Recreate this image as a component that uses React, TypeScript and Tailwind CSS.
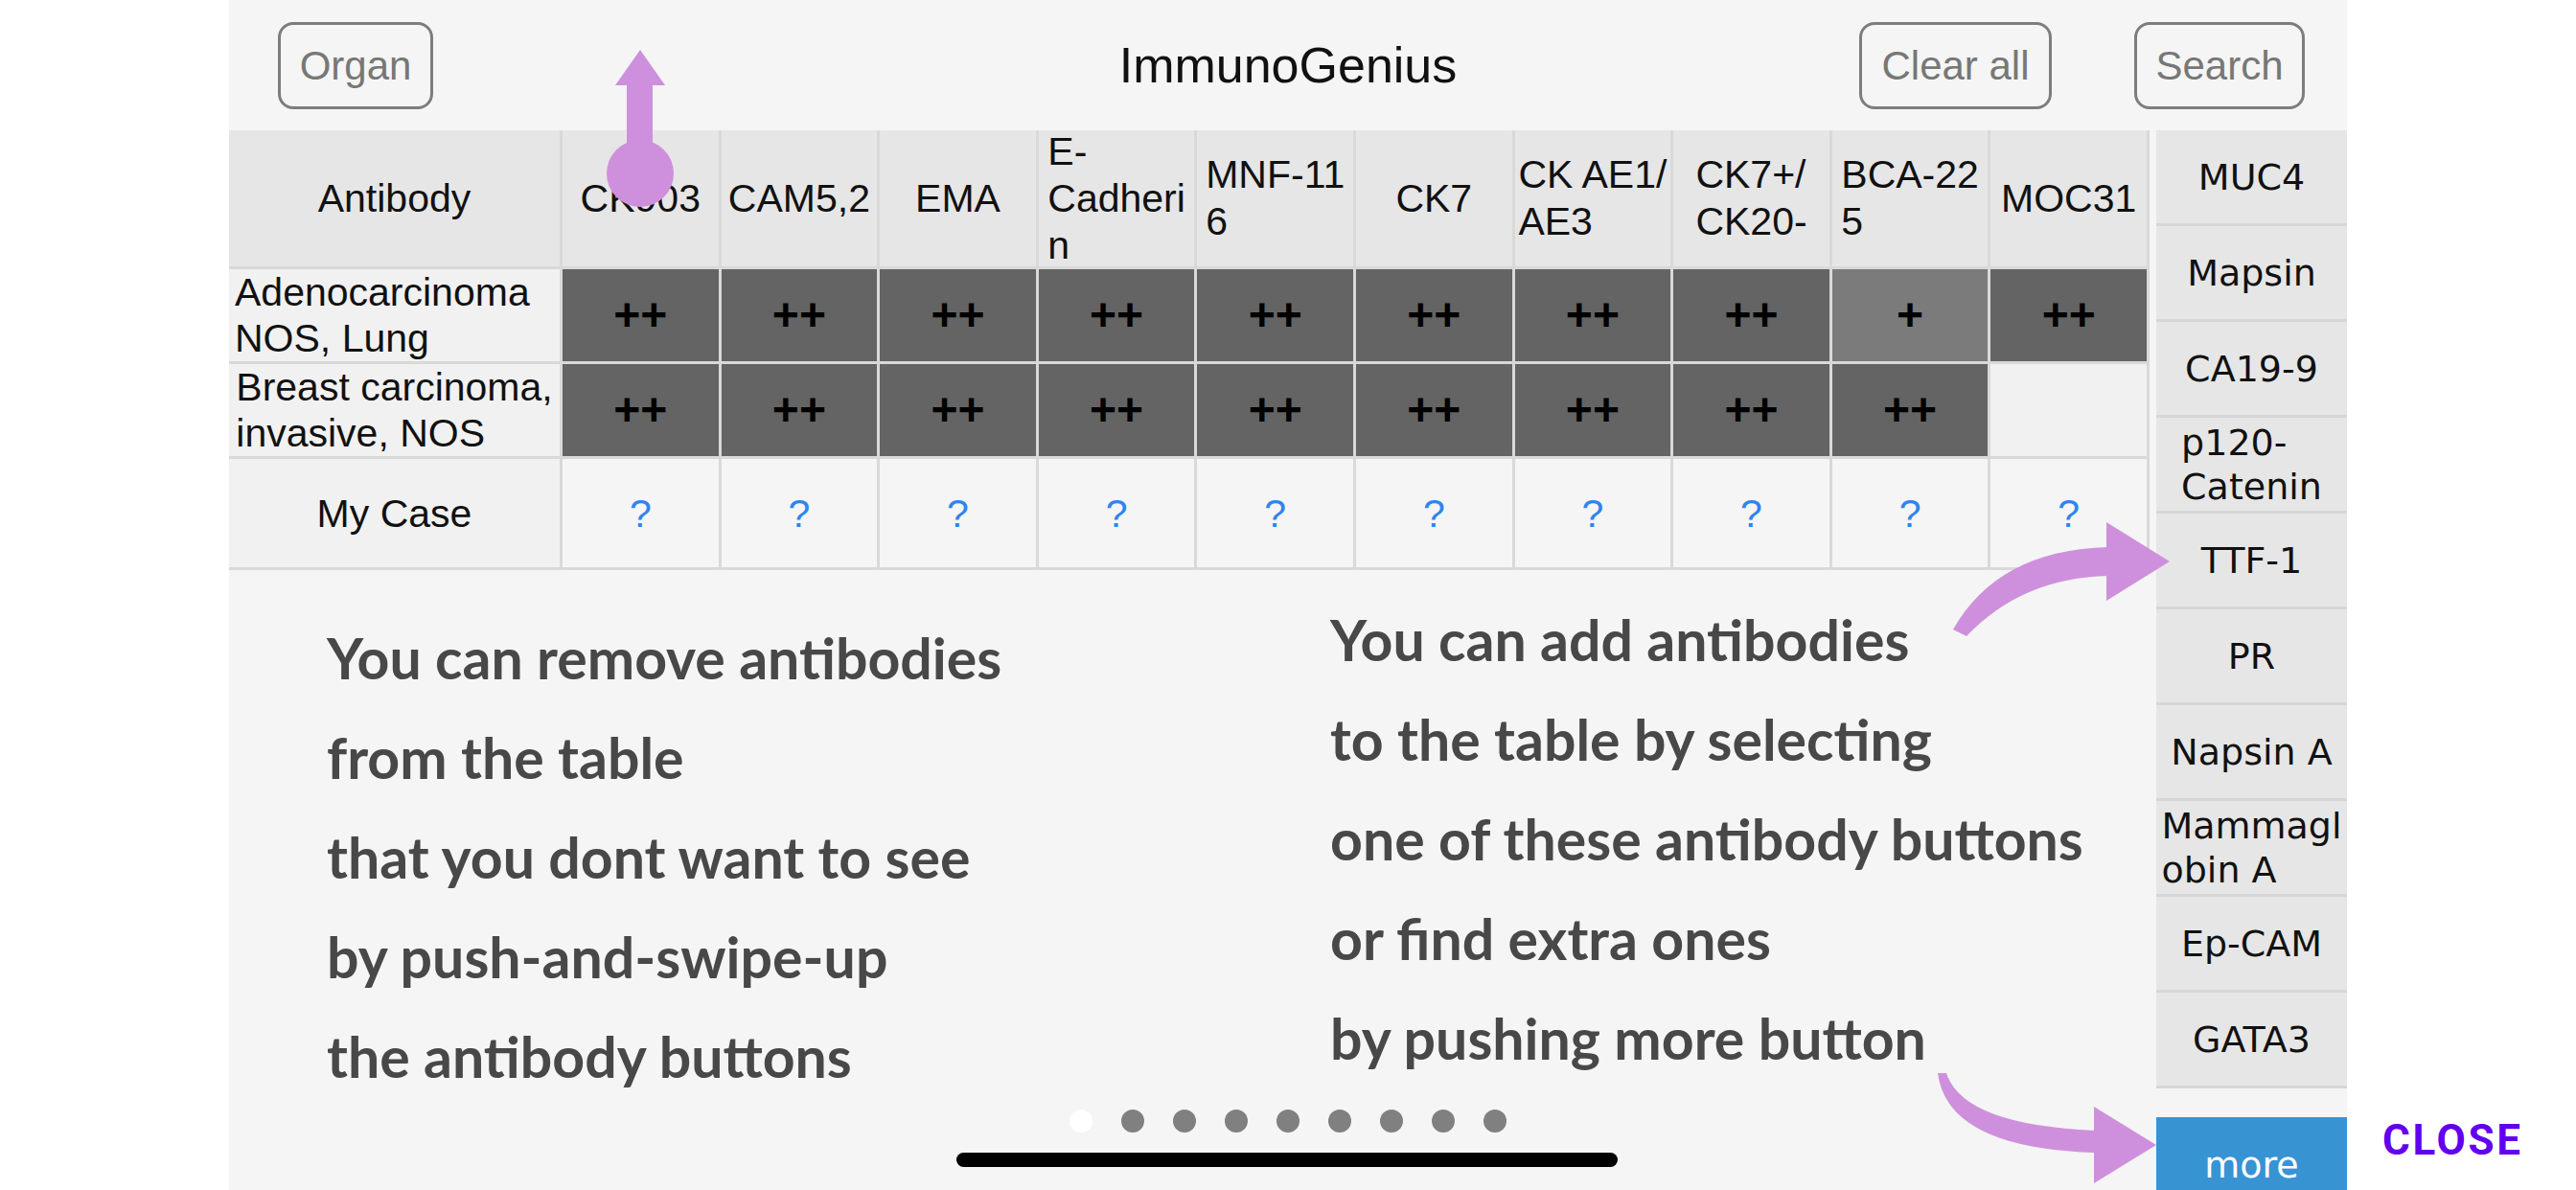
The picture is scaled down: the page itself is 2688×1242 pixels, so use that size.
import React from "react";

type Col = { head: string[]; r1: string; r2: string };

const columns: Col[] = [
  { head: ["CK903"], r1: "++", r2: "++" },
  { head: ["CAM5,2"], r1: "++", r2: "++" },
  { head: ["EMA"], r1: "++", r2: "++" },
  { head: ["E-", "Cadheri", "n"], r1: "++", r2: "++" },
  { head: ["MNF-11", "6"], r1: "++", r2: "++" },
  { head: ["CK7"], r1: "++", r2: "++" },
  { head: ["CK AE1/", "AE3"], r1: "++", r2: "++" },
  { head: ["CK7+/", "CK20-"], r1: "++", r2: "++" },
  { head: ["BCA-22", "5"], r1: "+", r2: "++" },
  { head: ["MOC31"], r1: "++", r2: "" },
];

const extras: string[][] = [
  ["MUC4"],
  ["Mapsin"],
  ["CA19-9"],
  ["p120-", "Catenin"],
  ["TTF-1"],
  ["PR"],
  ["Napsin A"],
  ["Mammagl", "obin A"],
  ["Ep-CAM"],
  ["GATA3"],
];

const leftText = [
  "You can remove antibodies",
  "from the table",
  "that you dont want to see",
  "by push-and-swipe-up",
  "the antibody buttons",
];

const rightText = [
  "You can add antibodies",
  "to the table by selecting",
  "one of these antibody buttons",
  "or find extra ones",
  "by pushing more button",
];

function Lines({ lines }: { lines: string[] }) {
  return (
    <div className="text-left">
      {lines.map((l) => (
        <div key={l}>{l}</div>
      ))}
    </div>
  );
}

function OutlineButton({ label, width }: { label: string; width: string }) {
  return (
    <div
      className={`${width} h-[91px] rounded-[16px] border-[3px] border-[#7d7d7d] flex items-center justify-center text-[42px] text-[#777]`}
    >
      {label}
    </div>
  );
}

function Header() {
  return (
    <header className="h-[136px] shrink-0 grid grid-cols-[1fr_auto_1fr] items-center">
      <div className="pl-[51px] flex">
        <OutlineButton label="Organ" width="w-[162px]" />
      </div>
      <h1 className="text-[52px] text-[#111]">ImmunoGenius</h1>
      <div className="flex justify-end gap-[86px] pr-[44px]">
        <OutlineButton label="Clear all" width="w-[201px]" />
        <OutlineButton label="Search" width="w-[178px]" />
      </div>
    </header>
  );
}

function ResultCell({ value }: { value: string }) {
  const bg = value === "++" ? "bg-[#646464]" : value === "+" ? "bg-[#7b7b7b]" : "bg-[#f1f1f1]";
  return (
    <div className={`${bg} flex items-center justify-center text-[48px] font-bold text-black`}>
      {value}
    </div>
  );
}

function Table() {
  return (
    <div className="w-[2004px] shrink-0 grid grid-cols-[345px_repeat(10,minmax(0,1fr))] grid-rows-[142px_96px_96px_113px] gap-[3px] bg-[#d9d9d9] border-b-[3px] border-r-[3px] border-[#d9d9d9] text-[41px] text-[#111] leading-[48px]">
      {/* header row */}
      <div className="bg-[#e6e6e6] flex items-center justify-center">Antibody</div>
      {columns.map((c) => (
        <div key={c.head.join("")} className="bg-[#e6e6e6] flex items-center justify-center leading-[49px]">
          <Lines lines={c.head} />
        </div>
      ))}

      {/* Adenocarcinoma */}
      <div className="bg-[#f1f1f1] flex items-center justify-start pl-[6px]">
        <Lines lines={["Adenocarcinoma", "NOS, Lung"]} />
      </div>
      {columns.map((c) => (
        <ResultCell key={"a" + c.head.join("")} value={c.r1} />
      ))}

      {/* Breast carcinoma */}
      <div className="bg-[#f1f1f1] flex items-center justify-center">
        <Lines lines={["Breast carcinoma,", "invasive, NOS"]} />
      </div>
      {columns.map((c) => (
        <ResultCell key={"b" + c.head.join("")} value={c.r2} />
      ))}

      {/* My case */}
      <div className="bg-[#f1f1f1] flex items-center justify-center">My Case</div>
      {columns.map((c) => (
        <div key={"m" + c.head.join("")} className="bg-[#f4f5f4] flex items-center justify-center text-[#2f84ee]">
          ?
        </div>
      ))}
    </div>
  );
}

function Sidebar() {
  return (
    <aside className="w-[199px] shrink-0 flex flex-col font-['DejaVu_Sans',sans-serif] text-[38px] text-[#111] leading-[46px]">
      {extras.map((e) => (
        <div
          key={e.join("")}
          className="h-[100px] shrink-0 bg-[#e6e6e6] border-b-[3px] border-[#d6d6d6] flex items-center justify-center"
        >
          <Lines lines={e} />
        </div>
      ))}
      <div className="mt-[30px] h-[100px] shrink-0 bg-[#3893d3] flex items-center justify-center text-white">
        more
      </div>
    </aside>
  );
}

function Arrows() {
  const purple = "#ce90dc";
  return (
    <svg className="absolute inset-0 pointer-events-none" width="2688" height="1242" viewBox="0 0 2688 1242">
      {/* swipe-up gesture */}
      <circle cx="668" cy="181" r="35" fill={purple} />
      <rect x="654" y="86" width="27" height="80" fill={purple} />
      <path d="M642 89 L668 52 L694 89 Z" fill={purple} />
      {/* curved arrow to the antibody buttons */}
      <path d="M2038 657 Q2085 574 2200 571 L2200 601 Q2110 603 2052 664 Z" fill={purple} />
      <path d="M2198 545 L2264 586 L2198 627 Z" fill={purple} />
      {/* curved arrow to more */}
      <path d="M2031 1120 Q2048 1174 2186 1180 L2186 1203 Q2032 1198 2022 1120 Z" fill={purple} />
      <path d="M2185 1155 L2250 1195 L2185 1235 Z" fill={purple} />
    </svg>
  );
}

export default function App() {
  return (
    <div className="relative w-[2688px] h-[1242px] bg-white flex overflow-hidden font-['Liberation_Sans',Arial,sans-serif]">
      <div className="w-[239px] shrink-0" />
      <div className="relative w-[2210px] shrink-0 h-full bg-[#f4f5f4] overflow-hidden flex flex-col">
        <Header />
        <div className="flex flex-1 min-h-0">
          <div className="w-[2011px] shrink-0 flex flex-col">
            <Table />
            <div className="flex font-['Lato',sans-serif] font-bold text-[59px] text-[#484848] leading-[104px]">
              <div className="ml-[102px] mt-[40px] w-[1047px] shrink-0">
                {leftText.map((l) => (
                  <div key={l}>{l}</div>
                ))}
              </div>
              <div className="mt-[21px] whitespace-nowrap">
                {rightText.map((l) => (
                  <div key={l}>{l}</div>
                ))}
              </div>
            </div>
          </div>
          <Sidebar />
        </div>

        {/* page indicator */}
        <div className="absolute bottom-[60px] inset-x-0 flex justify-center gap-[30px]">
          {Array.from({ length: 9 }).map((_, i) => (
            <span
              key={i}
              className={`w-[24px] h-[24px] rounded-full ${i === 0 ? "bg-white" : "bg-[#808080]"}`}
            />
          ))}
        </div>
        {/* home indicator */}
        <div className="absolute bottom-[24px] left-[759px] w-[690px] h-[15px] rounded-full bg-black" />
      </div>
      <div className="flex flex-col justify-end pl-[37px] pb-[27px]">
        <span className="font-['Roboto',sans-serif] font-bold text-[44px] tracking-[0.06em] text-[#6200ee] leading-[50px]">
          CLOSE
        </span>
      </div>
      <Arrows />
    </div>
  );
}
